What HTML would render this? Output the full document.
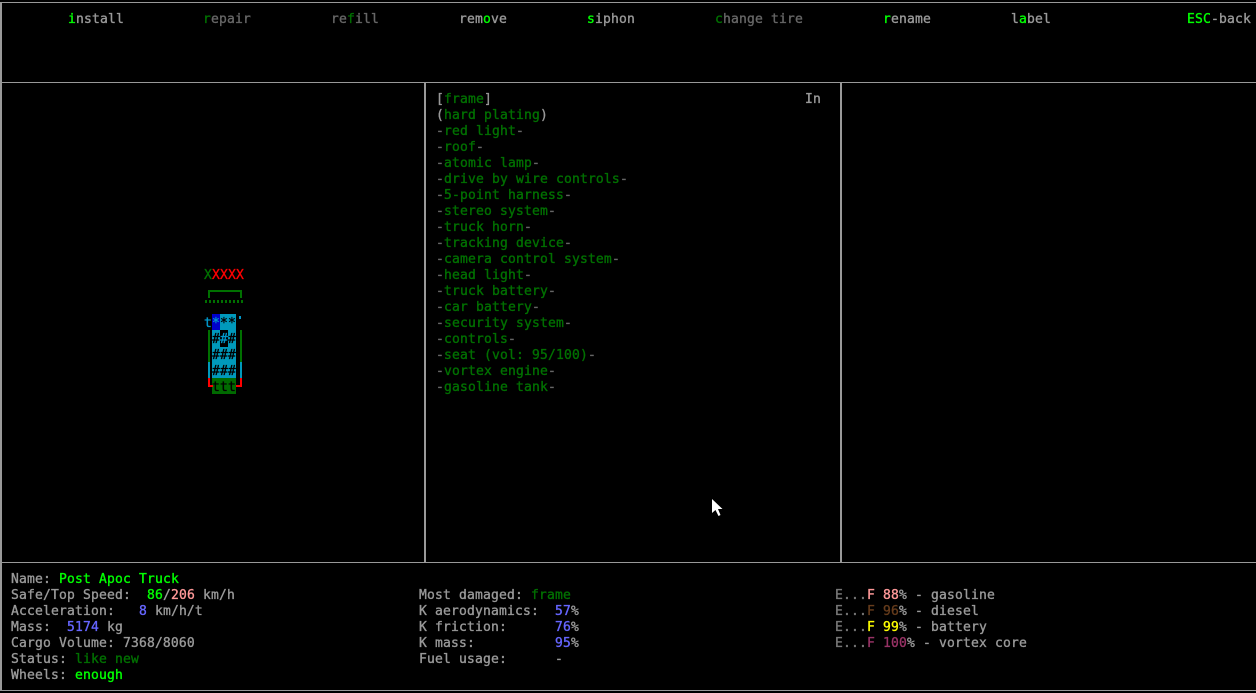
<!DOCTYPE html>
<html><head><meta charset="utf-8"><style>
html,body{margin:0;padding:0;background:#000;width:1256px;height:693px;overflow:hidden}
#s{position:relative;width:1256px;height:693px;background:#000;overflow:hidden}
.l{position:absolute;background:#999}
.r{position:absolute;background:#000}
pre{position:absolute;margin:0;font-family:"DejaVu Sans Mono","Liberation Mono",monospace;font-size:13px;line-height:16px;letter-spacing:.17px;color:#999;white-space:pre;-webkit-text-stroke:.35px currentColor}
b{font-weight:normal}
.G{color:#0f0}.g{color:#007000}.d{color:#666}.B{color:#6666ff}.p{color:#ff9999}.n{color:#663c1c}.y{color:#ff0}.m{color:#993366}.x{color:#ff0000}.k{color:#000}.c{color:#0099cc}
</style></head><body><div id="s">
<div class="l" style="left:0;top:2px;width:1256px;height:1px"></div>
<div class="l" style="left:0;top:2px;width:2px;height:689px"></div>
<div class="l" style="left:0;top:82px;width:1256px;height:1px"></div>
<div class="l" style="left:424px;top:82px;width:2px;height:481px"></div>
<div class="l" style="left:840px;top:82px;width:2px;height:481px"></div>
<div class="l" style="left:0;top:562px;width:1256px;height:1px"></div>
<div class="l" style="left:0;top:690px;width:1256px;height:1px"></div>

<pre style="left:68px;top:12px"><b class="G">i</b>nstall</pre>
<pre style="left:203px;top:12px" class="d"><b class="g">r</b>epair</pre>
<pre style="left:331px;top:12px" class="d">re<b class="g">f</b>ill</pre>
<pre style="left:459px;top:12px">rem<b class="G">o</b>ve</pre>
<pre style="left:587px;top:12px"><b class="G">s</b>iphon</pre>
<pre style="left:715px;top:12px" class="d"><b class="g">c</b>hange tire</pre>
<pre style="left:883px;top:12px"><b class="G">r</b>ename</pre>
<pre style="left:1011px;top:12px">l<b class="G">a</b>bel</pre>
<pre style="left:1187px;top:12px"><b class="G">ESC</b>-back</pre>

<div class="r" style="left:212px;top:314px;width:24px;height:64px;background:#0099bb"></div>
<div class="r" style="left:212px;top:314px;width:8px;height:16px;background:#0000cc"></div>
<div class="r" style="left:220px;top:330px;width:8px;height:17px;background:#000"></div>
<div class="r" style="left:212px;top:378px;width:24px;height:16px;background:#006a00"></div>
<pre style="left:204px;top:268px"><b class="g">X</b><b class="x">XXXX</b></pre>
<pre style="left:204px;top:316px" class="c">t<b>*</b><b class="k">**</b></pre>
<div class="r" style="left:239px;top:316px;width:2px;height:3px;background:#0099cc"></div>
<pre style="left:212px;top:332px" class="k">#<b class="c">#</b>#
###
###</pre>
<pre style="left:212px;top:380px" class="k">ttt</pre>
<div class="r" style="left:208px;top:290px;width:34px;height:2px;background:#007000"></div>
<div class="r" style="left:208px;top:290px;width:2px;height:8px;background:#007000"></div>
<div class="r" style="left:240px;top:290px;width:2px;height:8px;background:#007000"></div>
<svg style="position:absolute;left:205px;top:300px" width="38" height="3"><line x1="0" y1="1.5" x2="38" y2="1.5" stroke="#007000" stroke-width="3" stroke-dasharray="2 2"/></svg>
<div class="r" style="left:208px;top:330px;width:2px;height:32px;background:#007000"></div>
<div class="r" style="left:240px;top:330px;width:2px;height:32px;background:#007000"></div>
<div class="r" style="left:208px;top:362px;width:2px;height:16px;background:#0099bb"></div>
<div class="r" style="left:240px;top:362px;width:2px;height:16px;background:#0099bb"></div>
<div class="r" style="left:208px;top:378px;width:2px;height:9px;background:#f00"></div>
<div class="r" style="left:240px;top:378px;width:2px;height:9px;background:#f00"></div>
<div class="r" style="left:208px;top:385px;width:5px;height:2px;background:#f00"></div>
<div class="r" style="left:236px;top:385px;width:6px;height:2px;background:#f00"></div>

<pre style="left:436px;top:92px">[<b class="g">frame</b>]</pre>
<pre style="left:805px;top:92px">In</pre>
<pre style="left:436px;top:108px">(<b class="g">hard plating</b>)</pre>
<pre style="left:436px;top:124px" class="g"><b class="d">-</b>red light<b class="d">-</b>
<b class="d">-</b>roof<b class="d">-</b>
<b class="d">-</b>atomic lamp<b class="d">-</b>
<b class="d">-</b>drive by wire controls<b class="d">-</b>
<b class="d">-</b>5-point harness<b class="d">-</b>
<b class="d">-</b>stereo system<b class="d">-</b>
<b class="d">-</b>truck horn<b class="d">-</b>
<b class="d">-</b>tracking device<b class="d">-</b>
<b class="d">-</b>camera control system<b class="d">-</b>
<b class="d">-</b>head light<b class="d">-</b>
<b class="d">-</b>truck battery<b class="d">-</b>
<b class="d">-</b>car battery<b class="d">-</b>
<b class="d">-</b>security system<b class="d">-</b>
<b class="d">-</b>controls<b class="d">-</b>
<b class="d">-</b>seat (vol: 95/100)<b class="d">-</b>
<b class="d">-</b>vortex engine<b class="d">-</b>
<b class="d">-</b>gasoline tank<b class="d">-</b></pre>

<pre style="left:11px;top:572px">Name: <b class="G">Post Apoc Truck</b>
Safe/Top Speed:  <b class="G">86</b>/<b class="p">206</b> km/h
Acceleration:   <b class="B">8</b> km/h/t
Mass:  <b class="B">5174</b> kg
Cargo Volume: 7368/8060
Status: <b class="g">like new</b>
Wheels: <b class="G">enough</b></pre>

<pre style="left:419px;top:588px">Most damaged: <b class="g">frame</b>
K aerodynamics:  <b class="B">57</b>%
K friction:      <b class="B">76</b>%
K mass:          <b class="B">95</b>%
Fuel usage:      -</pre>

<pre style="left:835px;top:588px"><b style="color:#777">E...</b><b class="p">F 88</b>% - gasoline
<b style="color:#777">E...</b><b class="n">F 96</b>% - diesel
<b style="color:#777">E...</b><b class="y">F 99</b>% - battery
<b style="color:#777">E...</b><b class="m">F 100</b>% - vortex core</pre>

<svg style="position:absolute;left:711px;top:498px" width="13" height="20" viewBox="0 0 13 20"><path d="M1 1 L1 15 L4.5 12 L7.5 18 L9.5 17 L7 11 L11.5 11 Z" fill="#fff"/></svg>
</div></body></html>
